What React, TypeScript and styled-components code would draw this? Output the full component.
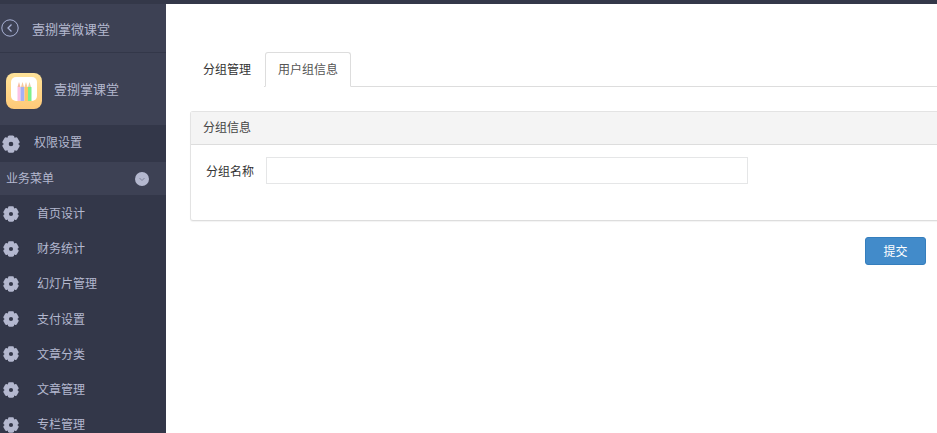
import React from 'react';
import styled, { createGlobalStyle } from 'styled-components';

const Global = createGlobalStyle`
  html, body { margin: 0; padding: 0; height: 100%; background: #fff; }
  body { font-family: "Microsoft YaHei", "Noto Sans CJK SC", "Liberation Sans", sans-serif; font-size: 12px; overflow: hidden; }
  * { box-sizing: border-box; }
`;

const Page = styled.div`
  display: flex;
  flex-direction: column;
  width: 937px;
  height: 433px;
  overflow: hidden;
`;
const TopStrip = styled.div`
  height: 4px;
  flex: none;
  background: #343849;
`;
const Body = styled.div`
  display: flex;
  flex: 1;
  min-height: 0;
`;
const Sidebar = styled.aside`
  width: 166px;
  flex: none;
  background: #333749;
  color: #b4b8cf;
  overflow: hidden;
`;
const BackRow = styled.div`
  height: 49px;
  display: flex;
  align-items: center;
  padding-left: 1px;
  gap: 13px;
  background: #3d4154;
  border-bottom: 1px solid #333749;
  font-size: 13px;
`;
const BrandRow = styled.div`
  height: 72px;
  display: flex;
  align-items: center;
  padding-left: 6px;
  gap: 12px;
  background: #3d4154;
  font-size: 13px;
`;
const PermRow = styled.div`
  height: 37px;
  display: flex;
  align-items: center;
  padding-left: 2px;
  gap: 14px;
  background: #333749;
`;
const GroupRow = styled.div`
  height: 33px;
  display: flex;
  align-items: center;
  justify-content: space-between;
  padding: 0 17px 0 6px;
  background: #3d4154;
`;
const MenuItem = styled.div`
  height: 35.2px;
  display: flex;
  align-items: center;
  padding-left: 3px;
  gap: 18px;
`;
const RowText = styled.span<{ $lift?: number }>`
  margin-bottom: ${p => p.$lift ?? 0}px;
`;
const LogoBox = styled.div`
  display: flex;
  margin-top: 4px;
`;
const GearBox = styled.div<{ $drop?: number }>`
  display: flex;
  margin-top: ${p => p.$drop ?? 0}px;
`;
const Main = styled.main`
  flex: 1;
  min-width: 0;
  padding: 48px 0 0 24px;
  color: #333;
`;
const Tabs = styled.div`
  display: flex;
  height: 35px;
  gap: 1px;
  border-bottom: 1px solid #ddd;
`;
const Tab = styled.div<{ $active?: boolean }>`
  height: 35px;
  display: flex;
  align-items: center;
  padding: 0 12px 2px;
  color: ${p => (p.$active ? '#555' : '#333')};
  background: #fff;
  border: 1px solid ${p => (p.$active ? '#ddd' : 'transparent')};
  border-bottom-color: ${p => (p.$active ? '#fff' : 'transparent')};
  border-radius: 3px 3px 0 0;
`;
const Panel = styled.section`
  margin: 24px -12px 0 0;
  height: 110px;
  border: 1px solid #e3e3e3;
  border-bottom-color: #ddd;
  border-radius: 3px;
  box-shadow: 0 1px 1px rgba(0, 0, 0, 0.05);
`;
const PanelHead = styled.div`
  height: 33px;
  display: flex;
  align-items: center;
  padding: 0 0 4px 12px;
  background: #f4f4f4;
  border-bottom: 1px solid #ddd;
  color: #444;
`;
const FormRow = styled.div`
  display: flex;
  align-items: center;
  padding: 12px 0 0 15px;
  gap: 12px;
`;
const Field = styled.input`
  width: 482px;
  height: 27px;
  border: 1px solid #e5e6e7;
  background: #fff;
  outline: none;
`;
const Actions = styled.div`
  display: flex;
  justify-content: flex-end;
  padding: 16px 11px 0 0;
`;
const Submit = styled.button`
  width: 61px;
  height: 28px;
  padding: 0 0 2px;
  font: inherit;
  color: #fff;
  background: #428bca;
  border: 1px solid #357ebd;
  border-radius: 3px;
`;

const Gear = ({ size }: { size: number }) => (
  <svg width={size} height={size} viewBox="0 0 24 24" fill="#b4b8cf">
    {[0, 60, 120, 180, 240, 300].map(a => (
      <rect key={a} x="7.5" y="0.5" width="9" height="6" rx="2.2" transform={`rotate(${a} 12 12)`} />
    ))}
    <circle cx="12" cy="12" r="6.4" fill="none" stroke="#b4b8cf" strokeWidth="6.6" />
  </svg>
);
const BackIcon = () => (
  <svg width="18" height="18" viewBox="0 0 18 18" fill="none" stroke="#a9b2d6" strokeWidth="1">
    <circle cx="9" cy="9" r="8.2" />
    <path d="M10.5 5.5 7 9l3.5 3.5" strokeWidth="1.3" />
  </svg>
);
const ChevronDot = () => (
  <svg width="14" height="14" viewBox="0 0 14 14" fill="none">
    <circle cx="7" cy="7" r="7" fill="#b4b8cf" />
    <path d="M4.5 6 7 8.5 9.5 6" stroke="#7f8399" strokeWidth="1" />
  </svg>
);
const Logo = () => (
  <svg width="36" height="36" viewBox="0 0 36 36">
    <defs>
      <linearGradient id="lg" x1="0" y1="0" x2="0" y2="1">
        <stop offset="0" stopColor="#ffe39a" />
        <stop offset="1" stopColor="#ffc978" />
      </linearGradient>
    </defs>
    <rect width="36" height="36" rx="8" fill="url(#lg)" />
    <rect x="5" y="4" width="26" height="24" rx="5" fill="#fff" />
    <path d="M13 9 14.5 14h-3z" fill="#f6b9a0" />
    <path d="M16.5 9 18 14h-3z" fill="#f6c9a0" />
    <path d="M20 9 21.5 14h-3z" fill="#f6c9a0" />
    <path d="M23.5 9 25 14h-3z" fill="#e8cfa8" />
    <rect x="11.5" y="14" width="3" height="14" fill="#fbc2e6" />
    <rect x="14.5" y="14" width="4" height="14" fill="#a5b0f5" />
    <rect x="18.5" y="14" width="3.5" height="14" fill="#ffc766" />
    <rect x="22" y="14" width="3.5" height="14" fill="#7df08a" />
  </svg>
);

const items = ['首页设计', '财务统计', '幻灯片管理', '支付设置', '文章分类', '文章管理', '专栏管理'];

export default function App() {
  return (
    <Page>
      <Global />
      <TopStrip />
      <Body>
        <Sidebar>
          <BackRow>
            <BackIcon />
            <span>壹捌掌微课堂</span>
          </BackRow>
          <BrandRow>
            <LogoBox><Logo /></LogoBox>
            <RowText $lift={2}>壹捌掌课堂</RowText>
          </BrandRow>
          <PermRow>
            <Gear size={18} />
            <RowText $lift={4}>权限设置</RowText>
          </PermRow>
          <GroupRow>
            <RowText $lift={2}>业务菜单</RowText>
            <ChevronDot />
          </GroupRow>
          {items.map(t => (
            <MenuItem key={t}>
              <GearBox $drop={2}><Gear size={16} /></GearBox>
              <span>{t}</span>
            </MenuItem>
          ))}
        </Sidebar>
        <Main>
          <Tabs>
            <Tab>分组管理</Tab>
            <Tab $active>用户组信息</Tab>
          </Tabs>
          <Panel>
            <PanelHead>分组信息</PanelHead>
            <FormRow>
              <label>分组名称</label>
              <Field />
            </FormRow>
          </Panel>
          <Actions>
            <Submit>提交</Submit>
          </Actions>
        </Main>
      </Body>
    </Page>
  );
}
